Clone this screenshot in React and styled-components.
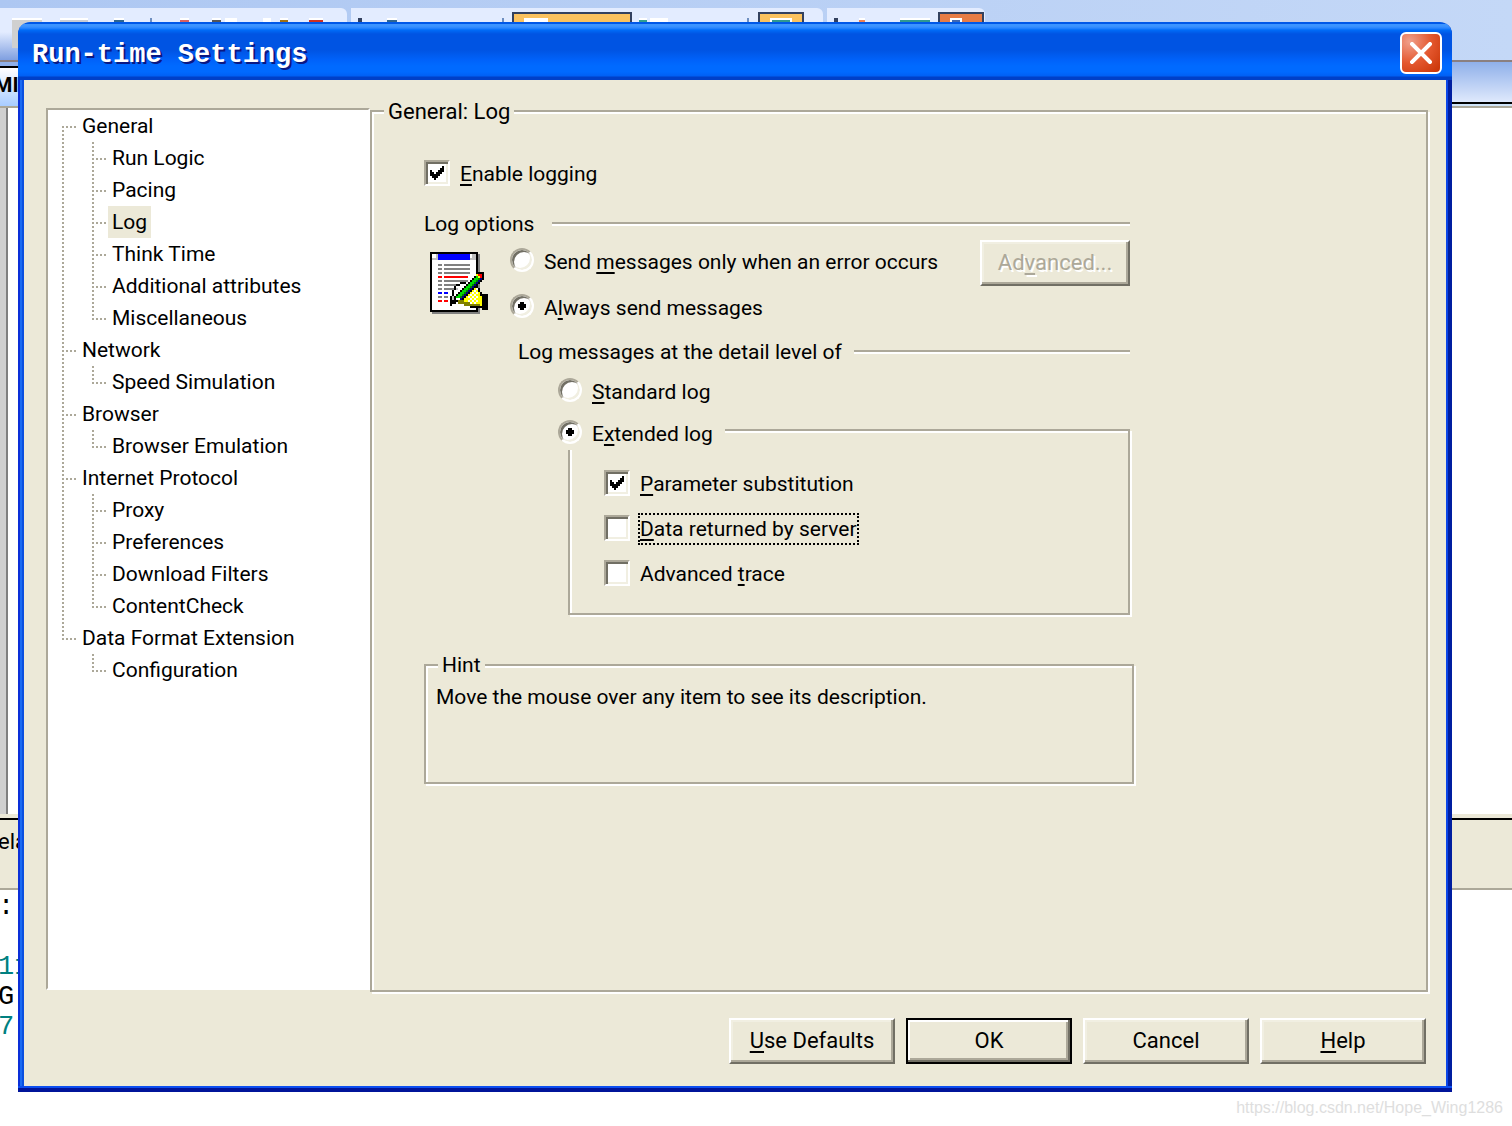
import React, { useState } from "react";
import styled, { createGlobalStyle, css } from "styled-components";

const face = "#ece9d8";
const shade = "#aca899";
const dark = "#716f64";

const GlobalStyle = createGlobalStyle`
  *, *::before, *::after { box-sizing: border-box; }
  body {
    margin: 0;
    background: #fff;
    color: #000;
    font-family: Roboto, "Liberation Sans", sans-serif;
    font-size: 21px;
    line-height: 32px;
  }
  button, input { font: inherit; color: inherit; margin: 0; }
`;

const Desktop = styled.div`
  position: relative;
  display: flex;
  flex-direction: column;
  min-height: 100vh;
  overflow: hidden;
`;

/* ---------- application behind the dialog ---------- */

const Backdrop = styled.div`
  position: absolute;
  inset: 0;
  display: flex;
  flex-direction: column;
`;

const Toolbar = styled.div`
  display: flex;
  gap: 4px;
  height: 62px;
  padding-top: 8px;
  background: linear-gradient(to right, #adc7f2, #c4d8f7);
  border-bottom: 2px solid #8a7f80;
`;

const ToolGroup = styled.div`
  display: flex;
  align-items: flex-start;
  width: ${(p) => p.$width}px;
  padding-top: 4px;
  border-radius: 0 6px 6px 0;
  background: linear-gradient(#e3ecff 0 24px, #7f9fe0);
`;

const ToolMark = styled.span`
  width: ${(p) => p.$w}px;
  height: 30px;
  margin: 6px 0 0 ${(p) => p.$gap}px;
  background: ${(p) => p.$color};
  border-top: 2px solid ${(p) => p.$edge || "#fff"};
`;

const ToolButton = styled.span`
  display: flex;
  justify-content: ${(p) => (p.$start ? "flex-start" : "center")};
  width: ${(p) => p.$w}px;
  height: 40px;
  margin-left: ${(p) => p.$gap}px;
  padding: 4px 10px 0;
  border: 2px solid #33415f;
  background: ${(p) => p.$color};
`;

const ToolFace = styled.span`
  width: ${(p) => p.$w}px;
  height: 20px;
  border: 2px solid #fff;
  background: ${(p) => p.$color};
`;

const CaptionRow = styled.div`
  display: grid;
  grid-template-columns: 18px 1fr;
  height: 46px;
  border-bottom: 2px solid ${shade};
`;

const CaptionLeft = styled.div`
  overflow: hidden;
  border-top: 4px solid #8fb0ea;
  background: linear-gradient(#000 0 2px, #fff 2px, #a8ccff);
  font-weight: 700;
  line-height: 38px;
  white-space: nowrap;
  text-indent: -6px;
`;

const CaptionRight = styled.div`
  background: linear-gradient(#8fb0ea, #dfe9fc 40px, #000 40px 42px, #cfe3f7 42px);
`;

const EditorArea = styled.div`
  height: 706px;
  width: 8px;
  background: #d0d0d0;
  border-right: 2px solid #808080;
`;

const OutputBar = styled.div`
  height: 76px;
  padding-top: 4px;
  border-top: 4px solid ${face};
  border-bottom: 2px solid ${shade};
  background: linear-gradient(#000 0 2px, ${face} 2px);
  font-size: 22px;
  line-height: 40px;
  text-indent: -2px;
`;

const OutputLine = styled.div`
  height: 30px;
  font-family: "Liberation Mono", monospace;
  font-size: 27px;
  line-height: 34px;
  text-indent: -2px;
  white-space: nowrap;
  color: ${(p) => p.$color || "#000"};
`;

/* ---------- dialog ---------- */

const Dialog = styled.section`
  position: relative;
  display: flex;
  flex-direction: column;
  min-height: calc(100vh - 56px);
  margin: 22px 60px 0 18px;
  padding: 0 6px 6px;
  border-radius: 12px 12px 0 0;
  background:
    linear-gradient(#0b4df0 0 2px, #00149a 2px) bottom / 100% 6px no-repeat,
    linear-gradient(to right, #0a2fd8 0 2px, #1a6af2 2px 4px, #0a50e0 4px) left / 6px 100% no-repeat,
    linear-gradient(to right, #0b46e8 0 2px, #001ea0 2px) right / 6px 100% no-repeat,
    ${face};
`;

const TitleBar = styled.header`
  display: flex;
  align-items: center;
  justify-content: space-between;
  height: 58px;
  margin: 0 -6px;
  padding: 4px 10px 0 14px;
  border-radius: 12px 12px 0 0;
  background: linear-gradient(
    #0058e8 0 2px, #3c94ff 2px 4px, #2a86ff 6px, #006cf8 8px, #0054e3 12px 28px,
    #0062fa 38px, #006aff 44px 50px, #0060f4 54px, #0040c8 55px);
`;

const Title = styled.h1`
  margin: 0;
  padding-top: 4px;
  color: #fff;
  font-family: "Liberation Mono", monospace;
  font-size: 27px;
  font-weight: 700;
  line-height: 32px;
  text-shadow: 2px 2px 0 #0a1883;
`;

const CloseButton = styled.button`
  display: grid;
  place-items: center;
  width: 42px;
  height: 42px;
  padding: 0;
  border: 2px solid #fff;
  border-radius: 6px;
  background: radial-gradient(circle at 20% 20%, #f0a08c, #e4582f 50%, #c83204);
`;

const Body = styled.div`
  display: flex;
  flex: 1;
  padding: 17px 18px 0 22px;
`;

const Tree = styled.ul`
  flex: 0 0 324px;
  margin: 11px 0 2px;
  padding: 0 0 0 14px;
  list-style: none;
  background: #fff;
  border: 2px solid ${shade};
  border-right-color: #fff;
  border-bottom-color: #fff;
`;

const Branch = styled.ul`
  margin: 0;
  padding: 0 0 0 30px;
  list-style: none;
`;

const dotsDown = `repeating-linear-gradient(${shade} 0 2px, transparent 2px 4px)`;
const dotsAcross = `repeating-linear-gradient(to right, ${shade} 0 2px, transparent 2px 4px)`;

const Node = styled.li`
  padding-left: 16px;
  background:
    ${dotsAcross} 0 16px / 14px 2px no-repeat,
    ${dotsDown} 0 ${(p) => (p.$first ? "16px" : "0")} / 2px ${(p) => (p.$last ? "16px" : "100%")} no-repeat;
  & > ul { margin-left: -16px; }
`;

const NodeLabel = styled.button`
  display: block;
  height: 32px;
  padding: 0 4px;
  border: 0;
  background: ${(p) => (p.$selected ? face : "transparent")};
  white-space: nowrap;
`;

const etched = css`
  border: 2px solid ${shade};
  box-shadow: 2px 2px 0 #fff, inset 2px 2px 0 #fff;
`;

const Panel = styled.fieldset`
  ${etched}
  flex: 1;
  min-width: 0;
  margin: 0;
  padding: 0 0 0 52px;
`;

const PanelLegend = styled.legend`
  margin-left: -40px;
  padding: 2px 4px 0;
  background: ${face};
  font-size: 22px;
  line-height: 26px;
`;

const Content = styled.div`
  display: flex;
  flex-direction: column;
  max-width: 710px;
  padding-top: 33px;
`;

const Heading = styled.div`
  display: flex;
  align-items: center;
  gap: ${(p) => p.$gap}px;
  margin: ${(p) => p.$margin};
  &::after {
    content: "";
    flex: 1;
    height: 4px;
    border-top: 2px solid ${shade};
    border-bottom: 2px solid #fff;
  }
`;

const Choice = styled.label`
  display: flex;
  align-items: center;
  gap: 10px;
  height: 32px;
  width: max-content;
`;

const Mark = styled.span`
  display: grid;
  place-items: center;
  margin-bottom: 2px;
  & > * { grid-area: 1 / 1; }
  & > svg { pointer-events: none; }
`;

const CheckInput = styled.input`
  appearance: none;
  width: 26px;
  height: 26px;
  border: 2px solid;
  border-color: ${shade} #fff #fff ${shade};
  background: #fff;
  box-shadow: inset 2px 2px 0 ${dark}, inset -2px -2px 0 #f1efe2;
  outline: none;
`;

const RadioInput = styled.input`
  appearance: none;
  width: 24px;
  height: 24px;
  border: 2px solid;
  border-color: ${shade} #fff #fff ${shade};
  border-radius: 50%;
  background: #fff;
  box-shadow: inset 2px 2px 0 ${dark}, inset -2px -2px 0 #f1efe2;
  outline: none;
`;

const ChoiceText = styled.span`
  margin: 0 -2px;
  padding: ${(p) => (p.$low ? "2px 2px 0" : "0 2px")};
  line-height: 32px;
  ${(p) => p.$focused && css`
    outline: 2px dotted #000;
    outline-offset: -2px;
  `}
`;

const Key = styled.span`
  text-decoration: underline;
  text-decoration-thickness: 2px;
  text-underline-offset: 3px;
  text-decoration-skip-ink: none;
`;

const SendRow = styled.div`
  display: flex;
  align-items: flex-start;
  width: 706px;
  max-width: 100%;
`;

const LogIcon = styled.svg`
  flex: none;
  margin: 12px 20px 0 6px;
`;

const Radios = styled.div`
  display: flex;
  flex-direction: column;
  gap: 14px;
  flex: 1;
  padding-top: 5px;
`;

const PushButton = styled.button`
  flex: none;
  width: ${(p) => p.$width}px;
  height: 46px;
  padding: 0;
  border: 2px solid;
  border-color: #fff ${dark} ${dark} #fff;
  background: ${face};
  box-shadow: inset -2px -2px 0 ${shade}, inset 2px 2px 0 #f1efe2;
  font-size: 22px;
  line-height: 38px;
  ${(p) => p.$primary && css`
    border-color: #000;
    box-shadow: inset -2px -2px 0 ${dark}, inset 2px 2px 0 #fff, inset -4px -4px 0 ${shade};
  `}
  &:disabled {
    color: ${shade};
    text-shadow: 2px 2px 0 #fff;
  }
`;

const Detail = styled.div`
  width: 612px;
  max-width: 100%;
  margin-left: 94px;
`;

const DetailIndent = styled.div`
  padding: 7px 0 0 40px;
`;

const ExtendedGroup = styled.fieldset`
  ${etched}
  display: flex;
  flex-direction: column;
  gap: 13px;
  min-width: 0;
  margin: 3px 0 0 10px;
  padding: 18px 0 23px 34px;
`;

const ExtendedLegend = styled.legend`
  margin-left: -46px;
  padding: 7px 12px 1px 0;
  background: ${face};
`;

const Hint = styled.fieldset`
  ${etched}
  min-width: 0;
  min-height: 135px;
  margin: 34px 0 0;
  padding: 0 10px;
`;

const HintLegend = styled.legend`
  margin-left: 2px;
  padding: 0 4px;
  background: ${face};
`;

const HintText = styled.p`
  margin: 0;
`;

const Actions = styled.footer`
  display: flex;
  flex-wrap: wrap;
  justify-content: flex-end;
  gap: 11px;
  padding: 26px 20px 22px 0;
`;

const Watermark = styled.div`
  position: relative;
  padding-right: 9px;
  color: #dedede;
  font-family: "Liberation Sans", sans-serif;
  font-size: 16px;
  text-align: right;
`;

const TREE = [
  { name: "General", items: ["Run Logic", "Pacing", "Log", "Think Time", "Additional attributes", "Miscellaneous"] },
  { name: "Network", items: ["Speed Simulation"] },
  { name: "Browser", items: ["Browser Emulation"] },
  { name: "Internet Protocol", items: ["Proxy", "Preferences", "Download Filters", "ContentCheck"] },
  { name: "Data Format Extension", items: ["Configuration"] },
];

function CheckBox({ children, focused, initial }) {
  const [on, setOn] = useState(!!initial);
  return (
    <Choice>
      <Mark>
        <CheckInput type="checkbox" checked={on} onChange={() => setOn(!on)} />
        {on && (
          <svg width="14" height="14" viewBox="0 0 7 7" shapeRendering="crispEdges">
            <path d="M0 2h1v1h1v1h1v-1h1v-1h1v-1h1v-1h1v3h-1v1h-1v1h-1v1h-1v1h-1v-1h-1v-1h-1z" />
          </svg>
        )}
      </Mark>
      <ChoiceText $focused={focused}>{children}</ChoiceText>
    </Choice>
  );
}

function Radio({ name, checked, onSelect, children }) {
  return (
    <Choice>
      <Mark>
        <RadioInput type="radio" name={name} checked={checked} onChange={onSelect} />
        {checked && (
          <svg width="8" height="8" viewBox="0 0 4 4" shapeRendering="crispEdges">
            <path d="M1 0h2v1h1v2h-1v1h-2v-1h-1v-2h1z" />
          </svg>
        )}
      </Mark>
      <ChoiceText $low>{children}</ChoiceText>
    </Choice>
  );
}

function NotepadIcon() {
  const lines = [
    [10, 13, "#808080"], [12, 13, "#808080"], [14, 13, "#808080"], [16, 12, "#f00"],
    [18, 12, "#808080"], [20, 9, "#808080"], [22, 8, "#808080"], [24, 2, "#00f"],
    [26, 2, "#808080"], [28, 2, "#f00"],
  ];
  const steps = [0, 1, 2, 3, 4, 5, 6, 7, 8, 9, 10];
  return (
    <LogIcon width="60" height="62" viewBox="3 4 30 31" shapeRendering="crispEdges" aria-hidden="true">
      <path fill="#808080" d="M27 5h1v30H4v-1h23z" />
      <path d="M3 4h24v30H3z" />
      <path fill="#fff" d="M4 5h22v28H4z" />
      <path fill="#c0c0c0" d="M4 7h2V5h1v3H4zM24 5h2v3h-3V7h1z" />
      <path fill="#00f" d="M7 5h16v3H7z" />
      {lines.map(([y, w, c]) => (
        <path key={y} fill={c} d={`M7 ${y}h2v1h-2zM10 ${y}h${w}v1h-${w}z`} />
      ))}
      <path fill="#fff" d="M18 20h4v2h-2v2h-2v2h-2v2h-2v-4h1v-2h2v-1h1z" />
      <path fill="#c0c0c0" d="M14 25h1v3h-1zM16 22h1v1h-1zM26 19h1v2h-1z" />
      <path d="M18 19h3v1h-3zM16 20h2v1h-2zM15 21h1v2h-1zM14 23h1v3h-1zM13 26h1v5h-1zM26 20h1v3h-1zM27 22h1v2h-1zM28 24h1v2h-1z" />
      <path fill="#ff0" d="M23 21h3v2h1v1h1v2h1v5h-6v-1h-3v-2h-2v-2h2v-2h1v-2h2z" />
      <g fill="#fff">
        {[22, 24, 26, 28].map((y) => (
          <path key={y} d={`M22 ${y}h1v1h-1zM24 ${y}h1v1h-1zM26 ${y}h1v1h-1zM23 ${y + 1}h1v1h-1zM25 ${y + 1}h1v1h-1z`} />
        ))}
      </g>
      <path fill="#808000" d="M17 28h3v1h3v1h5v1h-8v-1h-3z" />
      <path d="M29 25h3v8h-3v-1h-6v-1h6z" />
      {steps.map((i) => (
        <g key={i} transform={`translate(${26 - i} ${16 + i})`}>
          <path d="M-1 0h1v1h-1zM3 1h1v1h-1z" />
          <path fill="#00d800" d="M0 0h2v1h-2z" />
          <path fill="#008000" d="M2 0h1v1h-1z" />
          <path fill="#000080" d="M2 1h1v1h-1z" />
        </g>
      ))}
      <path d="M26 14h4v1h-4zM29 15h1v3h-1zM15 27h1v1h-1zM14 28h3v1h-3zM14 29h2v1h-2zM13 30h1v1h-1z" />
      <path fill="#f00" d="M27 15h2v2h-2z" />
      <path fill="#ff0" d="M26 15h1v1h-1zM27 16h1v1h-1z" />
    </LogIcon>
  );
}

function BackgroundApp() {
  const orange = "#fbc25e";
  return (
    <Backdrop aria-hidden="true">
      <Toolbar>
        <ToolGroup $width={347}>
          <ToolMark $w={30} $gap={12} $color="#d0d0d0" />
          <ToolMark $w={28} $gap={18} $color="#c8ccd4" />
          <ToolMark $w={10} $gap={26} $color="#2f6690" />
          <ToolMark $w={2} $gap={26} $color="#6f8fc0" $edge="#6f8fc0" />
          <ToolMark $w={9} $gap={28} $color="#d86060" />
          <ToolMark $w={9} $gap={23} $color="#555" />
          <ToolMark $w={12} $gap={4} $color="#fff" />
          <ToolMark $w={8} $gap={26} $color="#fff" />
          <ToolMark $w={8} $gap={9} $color="#a07010" />
          <ToolMark $w={14} $gap={21} $color="#d03020" />
        </ToolGroup>
        <ToolGroup $width={472}>
          <ToolMark $w={4} $gap={7} $color="#33415f" $edge="#33415f" />
          <ToolMark $w={10} $gap={25} $color="#2f6690" />
          <ToolMark $w={2} $gap={105} $color="#6f8fc0" $edge="#6f8fc0" />
          <ToolButton $w={120} $gap={8} $color={orange} $start>
            <ToolFace $w={24} $color="#fff" />
          </ToolButton>
          <ToolMark $w={8} $gap={7} $color="#30a090" />
          <ToolMark $w={18} $gap={3} $color="#fff" />
          <ToolMark $w={2} $gap={79} $color="#6f8fc0" $edge="#6f8fc0" />
          <ToolButton $w={46} $gap={9} $color={orange}>
            <ToolFace $w={32} $color="#309890" />
          </ToolButton>
        </ToolGroup>
        <ToolGroup $width={158}>
          <ToolMark $w={4} $gap={7} $color="#33415f" $edge="#33415f" />
          <ToolMark $w={6} $gap={21} $color="#f08050" />
          <ToolMark $w={30} $gap={35} $color="#309890" />
          <ToolButton $w={46} $gap={8} $color="#e77c45" $start>
            <ToolFace $w={12} $color="#4068b0" />
          </ToolButton>
        </ToolGroup>
      </Toolbar>
      <CaptionRow>
        <CaptionLeft>MI</CaptionLeft>
        <CaptionRight />
      </CaptionRow>
      <EditorArea />
      <OutputBar>ela</OutputBar>
      <OutputLine>:</OutputLine>
      <OutputLine />
      <OutputLine $color="#008080">11</OutputLine>
      <OutputLine>G-</OutputLine>
      <OutputLine $color="#008080">7'</OutputLine>
    </Backdrop>
  );
}

export default function App() {
  const [page, setPage] = useState("Log");
  const [send, setSend] = useState("always");
  const [level, setLevel] = useState("extended");

  return (
    <Desktop>
      <GlobalStyle />
      <BackgroundApp />
      <Dialog role="dialog" aria-labelledby="dialog-title">
        <TitleBar>
          <Title id="dialog-title">Run-time Settings</Title>
          <CloseButton aria-label="Close">
            <svg width="22" height="22" viewBox="0 0 22 22">
              <path d="M2 2L20 20M20 2L2 20" stroke="#fff" strokeWidth="4" strokeLinecap="square" />
            </svg>
          </CloseButton>
        </TitleBar>

        <Body>
          <Tree>
            {TREE.map((group, g) => (
              <Node key={group.name} $first={g === 0} $last={g === TREE.length - 1}>
                <NodeLabel $selected={page === group.name} onClick={() => setPage(group.name)}>
                  {group.name}
                </NodeLabel>
                <Branch>
                  {group.items.map((item, i) => (
                    <Node key={item} $last={i === group.items.length - 1}>
                      <NodeLabel $selected={page === item} onClick={() => setPage(item)}>
                        {item}
                      </NodeLabel>
                    </Node>
                  ))}
                </Branch>
              </Node>
            ))}
          </Tree>

          <Panel>
            <PanelLegend>General: Log</PanelLegend>
            <Content>
              <CheckBox initial><Key>E</Key>nable logging</CheckBox>
              <Heading $gap={18} $margin="18px 4px 0 0">Log options</Heading>
              <SendRow>
                <NotepadIcon />
                <Radios>
                  <Radio name="send" checked={send === "error"} onSelect={() => setSend("error")}>
                    Send <Key>m</Key>essages only when an error occurs
                  </Radio>
                  <Radio name="send" checked={send === "always"} onSelect={() => setSend("always")}>
                    A<Key>l</Key>ways send messages
                  </Radio>
                </Radios>
                <PushButton $width={150} disabled>Ad<Key>v</Key>anced...</PushButton>
              </SendRow>
              <Detail>
                <Heading $gap={12} $margin="13px 0 0">Log messages at the detail level of</Heading>
                <DetailIndent>
                  <Radio name="level" checked={level === "standard"} onSelect={() => setLevel("standard")}>
                    <Key>S</Key>tandard log
                  </Radio>
                  <ExtendedGroup>
                    <ExtendedLegend>
                      <Radio name="level" checked={level === "extended"} onSelect={() => setLevel("extended")}>
                        E<Key>x</Key>tended log
                      </Radio>
                    </ExtendedLegend>
                    <CheckBox initial><Key>P</Key>arameter substitution</CheckBox>
                    <CheckBox focused><Key>D</Key>ata returned by server</CheckBox>
                    <CheckBox>Advanced <Key>t</Key>race</CheckBox>
                  </ExtendedGroup>
                </DetailIndent>
              </Detail>
              <Hint>
                <HintLegend>Hint</HintLegend>
                <HintText>Move the mouse over any item to see its description.</HintText>
              </Hint>
            </Content>
          </Panel>
        </Body>

        <Actions>
          <PushButton $width={166}><Key>U</Key>se Defaults</PushButton>
          <PushButton $width={166} $primary>OK</PushButton>
          <PushButton $width={166}>Cancel</PushButton>
          <PushButton $width={166}><Key>H</Key>elp</PushButton>
        </Actions>
      </Dialog>
      <Watermark>https://blog.csdn.net/Hope_Wing1286</Watermark>
    </Desktop>
  );
}
